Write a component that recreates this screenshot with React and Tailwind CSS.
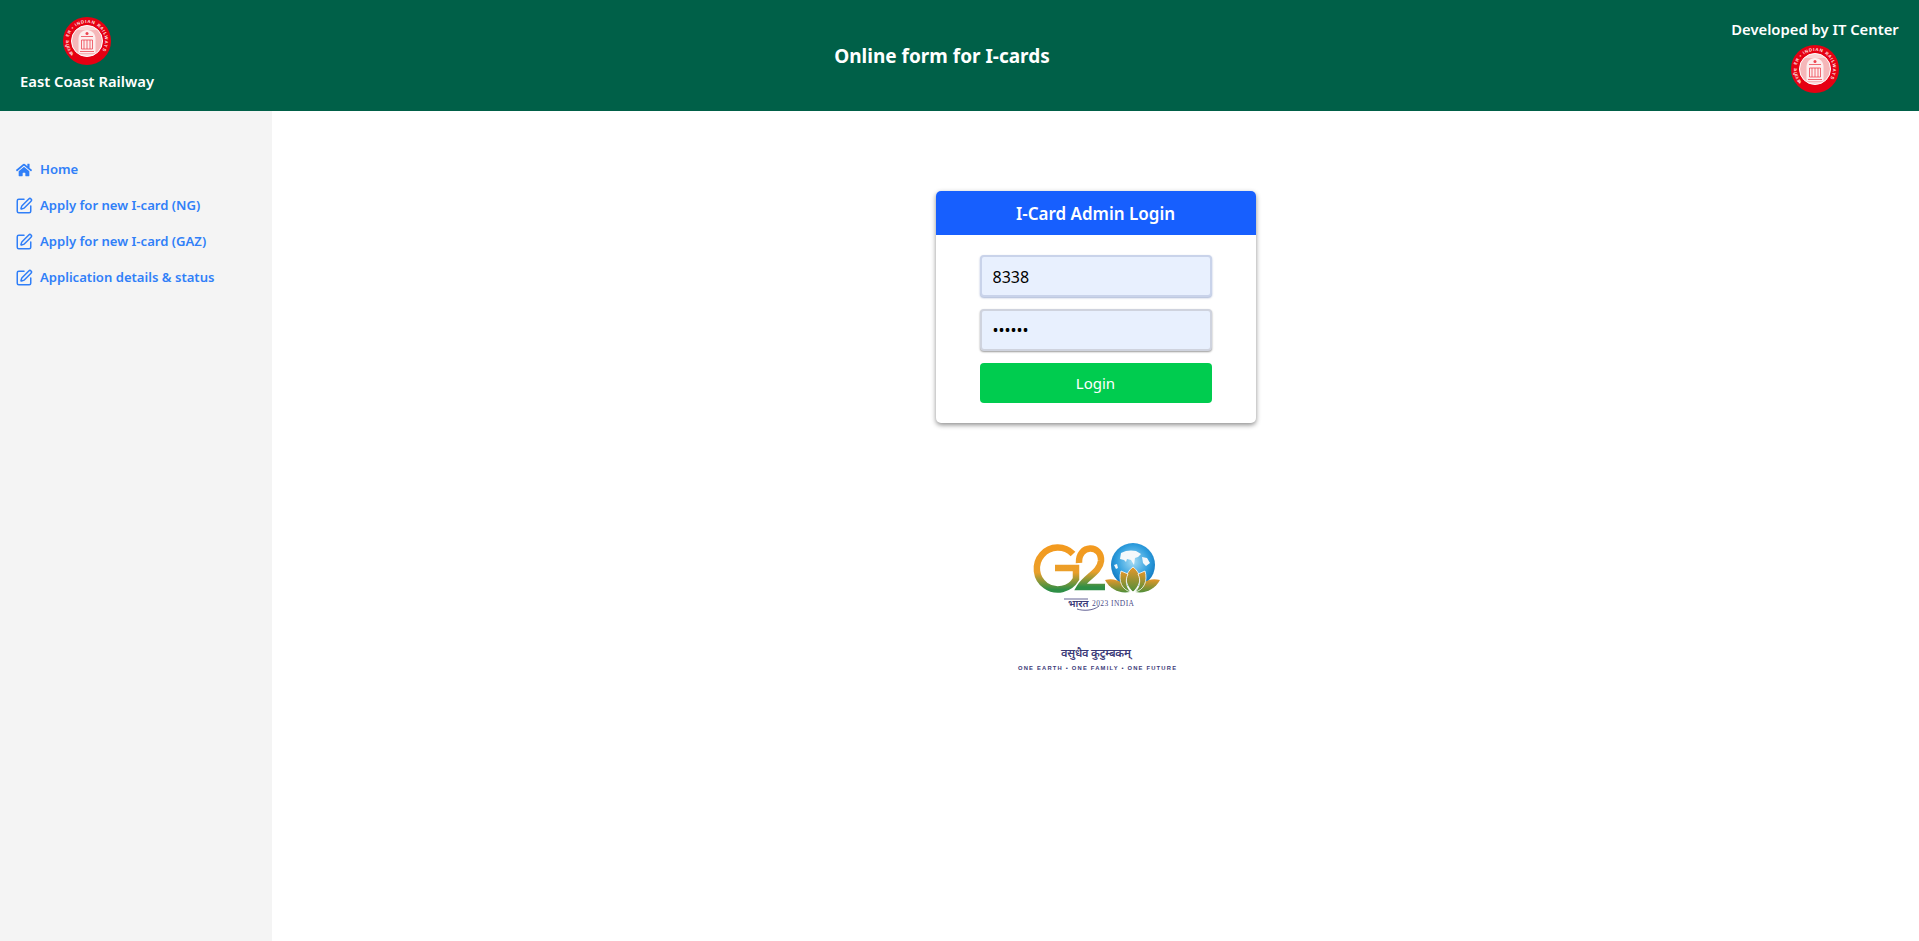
import React from 'react';
import { FaHome } from 'react-icons/fa';
import { SquarePen } from 'lucide-react';

const font = { fontFamily: '"Noto Sans", "Open Sans", sans-serif' };

const RailwaySeal = ({ id }) => (
  <svg viewBox="0 0 48 48" className="block h-[48px] w-[48px]">
    <defs>
      <path id={id} d="M 11.300 36.700 A 18 18 0 1 1 36.700 36.700" fill="none" />
    </defs>
    <circle cx="24" cy="24" r="24" fill="#e60012" />
    <text fontSize="4.400" fontWeight="700" fill="#ffe9e9" fontFamily="Liberation Sans, sans-serif">
      <textPath href={`#${id}`} textLength="80">भारतीय रेल • INDIAN RAILWAYS</textPath>
    </text>
    <circle cx="24" cy="24" r="15.500" fill="#f9d5d5" />
    <g stroke="#ea4a55" strokeWidth="0.6" fill="none" opacity="0.7">
      <path d="M10 14h28M9.500 16h29M9 18h30M9 20h30M9 22h30M9 24h30M9 26h30M9 28h30M9.500 30h29M10 32h28M11 34h26M13 36h22" />
    </g>
    <circle cx="24" cy="24" r="15.500" fill="none" stroke="#fff" strokeWidth="1" />
    <path d="M15.500 36V22c0-5.500 3.800-9 8.500-9s8.500 3.500 8.500 9v14z" fill="#fdeeee" />
    <path d="M18 19.500h12M18.500 23h11v9h-11zM21 23v9M24 23v9M27 23v9M17 34.500h14" stroke="#ec4450" strokeWidth="0.8" fill="none" />
    <circle cx="24" cy="16.500" r="1.500" fill="#ec4450" />
  </svg>
);

const G20Logo = () => (
  <svg viewBox="0 0 190 150" className="block h-[150px] w-[190px]">
    <defs>
      <linearGradient id="gGrad" x1="0" y1="0" x2="0" y2="1">
        <stop offset="0" stopColor="#f39a1f" />
        <stop offset="0.6" stopColor="#ea9f2a" />
        <stop offset="1" stopColor="#2f8f46" />
      </linearGradient>
      <linearGradient id="lotusGrad" x1="0" y1="0" x2="0" y2="1">
        <stop offset="0" stopColor="#e8962a" />
        <stop offset="1" stopColor="#4f8f3a" />
      </linearGradient>
      <radialGradient id="globeGrad" cx="0.5" cy="0.42" r="0.62">
        <stop offset="0" stopColor="#a5dcf5" />
        <stop offset="0.6" stopColor="#2f9ede" />
        <stop offset="1" stopColor="#0b6fb8" />
      </radialGradient>
    </defs>
    {/* G */}
    <path d="M72 24 A 21 21 0 1 0 75 49 V 38 H 54" fill="none" stroke="url(#gGrad)" strokeWidth="6.500" />
    {/* 2 */}
    <path d="M78 33 C 77 14 101 14 100 31 C 99 42 85 47 79 57 H 104" fill="none" stroke="url(#gGrad)" strokeWidth="6.500" />
    {/* globe */}
    <circle cx="132" cy="35" r="22" fill="url(#globeGrad)" />
    <path d="M120 23c5-3 11-3 15-2l5 3-3 3-3 1-1 7-3-5-4-1-1 3-2-2-4-1z" fill="#f4f8fb" />
    <path d="M141 27l5 1 3 5-4 3-3-3zM113 35l3-1 1 4-2 1z" fill="#f4f8fb" />
    {/* lotus */}
    <path d="M104 50 C 114 47 123 52 129 62 C 118 64 109 59 104 50z" fill="url(#lotusGrad)" />
    <path d="M159 50 C 149 47 140 52 134 62 C 145 64 154 59 159 50z" fill="url(#lotusGrad)" />
    <path d="M132 37 C 141 44 141 54 132 62 C 123 54 123 44 132 37z" fill="url(#lotusGrad)" stroke="#fff" strokeWidth="0.8" />
    <path d="M120 41 L 127 44 C 124 50 125 57 130 62 C 121 60 117 51 120 41z" fill="url(#lotusGrad)" stroke="#fff" strokeWidth="0.8" />
    <path d="M144 41 L 137 44 C 140 50 139 57 134 62 C 143 60 147 51 144 41z" fill="url(#lotusGrad)" stroke="#fff" strokeWidth="0.8" />
    {/* caption */}
    <text x="67" y="77" fontSize="10" fontWeight="600" fill="#3b3a78" fontFamily="Noto Sans, sans-serif">भारत</text>
    <path d="M63 69 H 87 M 76 79 C 82 81 92 81 98 76" stroke="#3b3a78" strokeWidth="0.8" fill="none" />
    <text x="91" y="76" fontSize="7.500" fill="#4a4a86" fontFamily="Liberation Serif, serif" textLength="42">2023 INDIA</text>
    <text x="60" y="127" fontSize="11" fontWeight="600" fill="#3b3a78" fontFamily="Noto Sans, sans-serif" textLength="70">वसुधैव कुटुम्बकम्</text>
    <text x="17" y="140" fontSize="5.800" fontWeight="700" fill="#3b3a78" fontFamily="Liberation Sans, sans-serif" textLength="158">ONE EARTH • ONE FAMILY • ONE FUTURE</text>
  </svg>
);

const navItems = [
  { label: 'Home', Icon: FaHome, iconClass: 'h-[16px] w-[16px]' },
  { label: 'Apply for new I-card (NG)', Icon: SquarePen, iconClass: '-mx-[1px] h-[18px] w-[18px]' },
  { label: 'Apply for new I-card (GAZ)', Icon: SquarePen, iconClass: '-mx-[1px] h-[18px] w-[18px]' },
  { label: 'Application details & status', Icon: SquarePen, iconClass: '-mx-[1px] h-[18px] w-[18px]' },
];

const App = () => {
  return (
    <div className="flex h-[941px] flex-col overflow-hidden bg-white" style={font}>
      <header className="flex h-[111px] shrink-0 items-start justify-between bg-[#006048] text-white">
        <div className="flex w-[174px] flex-col items-center pt-[17px]">
          <RailwaySeal id="sealLeft" />
          <span className="mt-[6px] text-[14.8px] leading-[20px] font-semibold whitespace-nowrap">East Coast Railway</span>
        </div>
        <h1 className="pt-[43px] pr-[20px] text-[19px] leading-[26px] font-bold">Online form for I-cards</h1>
        <div className="flex w-[189px] flex-col items-center pt-[19px] pr-[19px]">
          <span className="text-[14.8px] leading-[20px] font-semibold whitespace-nowrap">Developed by IT Center</span>
          <div className="mt-[6px]">
            <RailwaySeal id="sealRight" />
          </div>
        </div>
      </header>

      <div className="flex flex-1">
        <aside className="w-[272px] shrink-0 bg-[#f4f4f4] pt-[41px] pl-[16px]">
          <nav className="flex flex-col">
            {navItems.map(({ label, Icon, iconClass }) => (
              <a key={label} href="#" className="flex h-[36px] items-center gap-[8px] text-[13.100px] font-semibold text-[#307ff8]">
                <Icon className={`shrink-0 ${iconClass}`} />
                {label}
              </a>
            ))}
          </nav>
        </aside>

        <main className="flex flex-1 flex-col items-center pt-[80px]">
          <div className="w-[320px] overflow-hidden rounded-[5px] bg-white shadow-[0_2px_5px_rgba(0,0,0,0.45)]">
            <div className="flex h-[44px] items-center justify-center bg-[#175ffe] pt-[1px] text-[17px] font-semibold text-white">
              I-Card Admin Login
            </div>
            <form className="flex flex-col items-center gap-[12px] pt-[20px] pb-[20px]">
              <input
                readOnly
                value="8338"
                className="h-[42px] w-[232px] rounded-[4px] border-2 border-[#c9d3ea] bg-[#e8f0fe] px-[11px] pt-[1px] text-[16px] text-black shadow-[0_1px_2px_rgba(60,90,160,0.45)] outline-none"
              />
              <input
                readOnly
                type="password"
                value="123456"
                className="h-[42px] w-[232px] rounded-[4px] border-2 border-[#cfd3de] bg-[#e8f0fe] px-[11px] text-[16px] text-black shadow-[0_1px_2px_rgba(0,0,0,0.4)] outline-none"
              />
              <button type="button" className="h-[40px] w-[232px] rounded-[4px] bg-[#00cc4f] text-[15px] text-white">
                Login
              </button>
            </form>
          </div>

          <div className="mt-[107px]">
            <G20Logo />
          </div>
        </main>
      </div>
    </div>
  );
};

export default App;
